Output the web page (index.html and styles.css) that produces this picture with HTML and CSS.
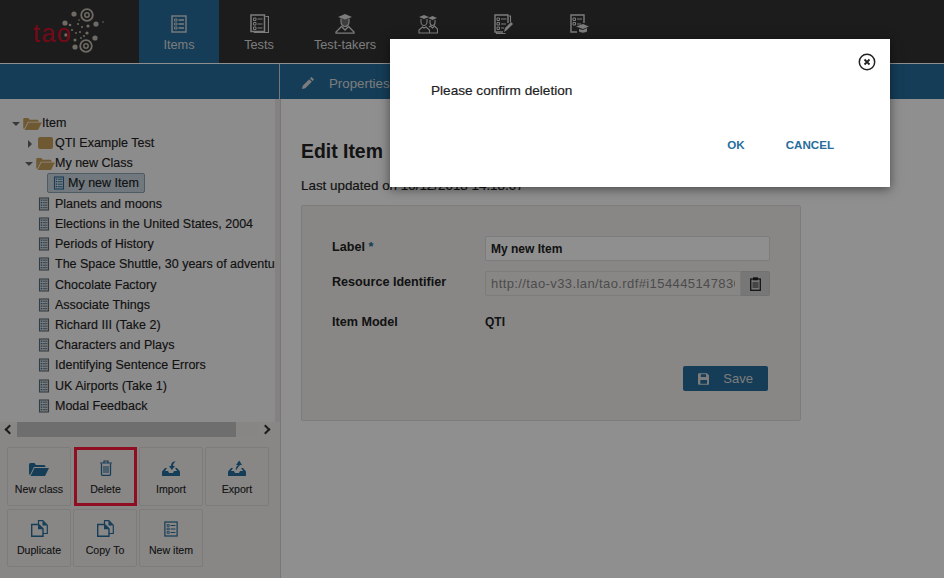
FILE: index.html
```html
<!DOCTYPE html>
<html lang="en">
<head>
<meta charset="utf-8">
<title>TAO - Items</title>
<link rel="stylesheet" href="styles.css">
</head>
<body>
<svg class="defs" width="0" height="0" aria-hidden="true">
  <symbol id="i-item" viewBox="0 0 16 18">
    <rect x="1" y="1" width="14" height="16" fill="none" stroke="currentColor" stroke-width="1.4"/>
    <path d="M3.500 4h2.500v2H3.500zM3.500 8h2.500v2H3.500zM3.500 12h2.500v2H3.500z" fill="none" stroke="currentColor" stroke-width=".9"/>
    <path d="M7.500 5h5.500M7.500 9h5.500M7.500 13h5.500" stroke="currentColor" stroke-width="1.300"/>
  </symbol>
  <symbol id="i-tree" viewBox="0 0 12 14">
    <rect x="1.500" y="1" width="9" height="12" fill="#d3dbe0" stroke="currentColor" stroke-width="1.100"/>
    <path d="M2.800 3.200h1.500M2.800 5.700h1.500M2.800 8.200h1.500M2.800 10.700h1.500" stroke="#2a6a96" stroke-width="1.300"/>
    <path d="M5 3.200h4.500M5 5.700h4.500M5 8.200h4.500M5 10.700h4.500" stroke="currentColor" stroke-width=".9"/>
  </symbol>
  <symbol id="i-folder-open" viewBox="0 0 20 14">
    <path d="M0 12V2.500Q0 1 1.500 1h4L7 3h8q1.500 0 1.500 1.500V5H5L1 13z" fill="currentColor"/>
    <path d="M5.500 6H20l-4 8H1.500z" fill="currentColor"/>
  </symbol>
  <symbol id="i-doc2" viewBox="0 0 17 17">
    <path d="M7.500 4.500V.7h4.300l4.500 4.500v8.300h-4.500" fill="none" stroke="currentColor" stroke-width="1.200"/>
    <path d="M11.500 1v4.500h4.500z" fill="currentColor"/>
    <path d="M.7 4.500h6.800l4.500 4.300v7.500H.7z" fill="none" stroke="currentColor" stroke-width="1.400"/>
    <path d="M7 4.500v4.800h5z" fill="currentColor"/>
  </symbol>
</svg>

<header class="topbar">
  <div class="logo">
    <svg class="logo-mark" width="110" height="60" viewBox="0 0 110 60" aria-hidden="true">
      <g fill="#c7bfb2">
        <circle cx="74" cy="14" r="2.600"/><circle cx="65" cy="23" r="2.600"/><circle cx="70" cy="25" r="1.300"/>
        <circle cx="96" cy="24" r="2.600"/><circle cx="88" cy="26" r="1.600"/><circle cx="95" cy="38" r="2.600"/>
        <circle cx="87" cy="33" r="1.600"/><circle cx="75" cy="47" r="2.600"/><circle cx="75" cy="40" r="1.500"/>
        <circle cx="66" cy="35" r="1.800"/><circle cx="72" cy="30" r="1"/><circle cx="78" cy="24" r="1"/>
        <circle cx="82" cy="27" r="1"/><circle cx="80" cy="32" r="1"/><circle cx="84" cy="36" r="1"/>
        <circle cx="76" cy="33" r=".9"/><circle cx="81" cy="38" r=".9"/><circle cx="79" cy="20" r=".8"/>
      </g>
      <g fill="none" stroke="#c7bfb2">
        <circle cx="87" cy="15" r="5.800" stroke-width="1.800"/><circle cx="87" cy="15" r="2.200" stroke-width="1.500"/>
        <circle cx="86" cy="46" r="5.800" stroke-width="1.800"/><circle cx="86" cy="46" r="2.200" stroke-width="1.500"/>
      </g>
      <circle cx="103" cy="22" r="1" fill="#888"/>
    </svg>
    <span class="logo-text">tao</span>
  </div>
  <nav class="mainnav">
    <a class="nav-item nav-items active">
      <svg class="nav-icon" width="16" height="18"><use href="#i-item"/></svg>
      <span>Items</span>
    </a>
    <a class="nav-item nav-tests">
      <svg class="nav-icon" width="19" height="20" viewBox="0 0 19 20">
        <path d="M15.500 2.500h3v16H4.500V17" fill="none" stroke="currentColor" stroke-width="1.200"/>
        <rect x="1" y="1" width="13.500" height="16.500" fill="none" stroke="currentColor" stroke-width="1.500"/>
        <path d="M3.500 4h2.500v2.500H3.500zM3.500 8.500h2.500V11H3.500zM3.500 13h2.500v2.500H3.500z" fill="none" stroke="currentColor"/>
        <path d="M7.500 5h5M7.500 10h5M7.500 14h5" stroke="currentColor" stroke-width="1.200"/>
      </svg>
      <span>Tests</span>
    </a>
    <a class="nav-item nav-takers">
      <svg class="nav-icon" width="20" height="20" viewBox="0 0 20 20">
        <path d="M10 0 3 3l7 2.500L17 3z" fill="currentColor"/>
        <path d="M6 4.500v3.500c0 2.500 2 4.500 4 4.500s4-2 4-4.500V4.500" fill="currentColor" fill-opacity=".35" stroke="currentColor" stroke-width="1.200"/>
        <path d="M6.500 12.500 1 18v1.200h18V18l-5.500-5.500L10 16z" fill="none" stroke="currentColor" stroke-width="1.300"/>
      </svg>
      <span>Test-takers</span>
    </a>
    <a class="nav-item nav-groups">
      <svg class="nav-icon" width="20" height="20" viewBox="0 0 20 20">
        <path d="M1 3l5-2 5 2-5 2zM10 4l4.500-2L19 4l-4.500 2z" fill="currentColor"/>
        <path d="M3 5v3c0 2 1.500 3.500 3 3.500S9 10 9 8V5M12 6v2.500c0 1.700 1 3 2.500 3S17 10.200 17 8.500V6" fill="none" stroke="currentColor" stroke-width="1.100"/>
        <path d="M1 19v-3l3.500-3L6 14l2-1 3.500 3v3zM11 13l1.500-1 2 2 2-2L19.500 15v4H12" fill="none" stroke="currentColor" stroke-width="1.100"/>
      </svg>
      <span>Groups</span>
    </a>
    <a class="nav-item nav-deliveries">
      <svg class="nav-icon" width="19" height="20" viewBox="0 0 19 20">
        <path d="M15 2h1.500v6M2.500 18v1.500h9" fill="none" stroke="currentColor" stroke-width="1.100"/>
        <path d="M14 9V1H1v17h8" fill="none" stroke="currentColor" stroke-width="1.400"/>
        <path d="M3 4h2.500v2.500H3zM3 8.500h2.500V11H3zM3 13h2.500v2.500H3z" fill="none" stroke="currentColor"/>
        <path d="M7 5h5.500M7 10h5M7 14h3" stroke="currentColor" stroke-width="1.200"/>
        <path d="M10 18l1-4 6-6 2 2-6 6z" fill="currentColor"/>
      </svg>
      <span>Deliveries</span>
    </a>
    <a class="nav-item nav-results">
      <svg class="nav-icon" width="19" height="20" viewBox="0 0 19 20">
        <path d="M14 9V1H1v17h6" fill="none" stroke="currentColor" stroke-width="1.400"/>
        <path d="M3 4h2.500v2.500H3zM3 8.500h2.500V11H3z" fill="none" stroke="currentColor"/>
        <path d="M7 5h5M7 10h4" stroke="currentColor" stroke-width="1.200"/>
        <path d="M13 10l-7 2.500 7 2.500 6-2.500zM9 15v2.500c2 1.500 6 1.500 8 0V14l-4 2z" fill="currentColor"/>
      </svg>
      <span>Results</span>
    </a>
  </nav>
</header>

<div class="subbar">
  <div class="subbar-left"></div>
  <div class="subbar-right">
    <svg class="pencil" width="12" height="12" viewBox="0 0 12 12"><path d="M0 12l.7-3.300 6.500-6.500 2.600 2.600-6.500 6.500zM8 1.400 9.200.2q.3-.2.600 0L11.800 2.200q.2.300 0 .6L10.600 4z" fill="currentColor"/></svg>
    <span>Properties</span>
  </div>
</div>

<main class="workspace">
  <aside class="sidebar">
    <div class="tree-wrap">
      <ul class="tree">
        <li class="row row-0"><i class="tri tri-down"></i><svg class="folder" width="19" height="13"><use href="#i-folder-open"/></svg><span>Item</span></li>
        <li class="row row-1"><i class="tri tri-right"></i><span class="folder-closed"></span><span>QTI Example Test</span></li>
        <li class="row row-1"><i class="tri tri-down"></i><svg class="folder" width="19" height="13"><use href="#i-folder-open"/></svg><span>My new Class</span></li>
        <li class="row row-sel"><span class="selected"><svg class="leaf" width="12" height="14"><use href="#i-tree"/></svg><span>My new Item</span></span></li>
        <li class="row row-leaf"><svg class="leaf" width="12" height="14"><use href="#i-tree"/></svg><span>Planets and moons</span></li>
        <li class="row row-leaf"><svg class="leaf" width="12" height="14"><use href="#i-tree"/></svg><span>Elections in the United States, 2004</span></li>
        <li class="row row-leaf"><svg class="leaf" width="12" height="14"><use href="#i-tree"/></svg><span>Periods of History</span></li>
        <li class="row row-leaf"><svg class="leaf" width="12" height="14"><use href="#i-tree"/></svg><span>The Space Shuttle, 30 years of adventure</span></li>
        <li class="row row-leaf"><svg class="leaf" width="12" height="14"><use href="#i-tree"/></svg><span>Chocolate Factory</span></li>
        <li class="row row-leaf"><svg class="leaf" width="12" height="14"><use href="#i-tree"/></svg><span>Associate Things</span></li>
        <li class="row row-leaf"><svg class="leaf" width="12" height="14"><use href="#i-tree"/></svg><span>Richard III (Take 2)</span></li>
        <li class="row row-leaf"><svg class="leaf" width="12" height="14"><use href="#i-tree"/></svg><span>Characters and Plays</span></li>
        <li class="row row-leaf"><svg class="leaf" width="12" height="14"><use href="#i-tree"/></svg><span>Identifying Sentence Errors</span></li>
        <li class="row row-leaf"><svg class="leaf" width="12" height="14"><use href="#i-tree"/></svg><span>UK Airports (Take 1)</span></li>
        <li class="row row-leaf"><svg class="leaf" width="12" height="14"><use href="#i-tree"/></svg><span>Modal Feedback</span></li>
      </ul>
      <div class="vscroll"></div>
    </div>
    <div class="hscroll">
      <span class="arrow arrow-l"></span>
      <div class="track"><div class="thumb"></div></div>
      <span class="arrow arrow-r"></span>
    </div>
    <div class="actions">
      <a class="action">
        <svg width="20" height="14"><use href="#i-folder-open"/></svg>
        <span>New class</span>
      </a>
      <a class="action action-hl">
        <svg width="14" height="16" viewBox="0 0 14 16"><path d="M1 3h12M5 3V1h4v2" fill="none" stroke="currentColor" stroke-width="1.200"/><path d="M2.500 3.500v11q0 .8.800.8h7.400q.8 0 .8-.8v-11" fill="none" stroke="currentColor" stroke-width="1.300"/><path d="M5 6v7M7 6v7M9 6v7" stroke="currentColor" stroke-width="1.100"/></svg>
        <span>Delete</span>
      </a>
      <a class="action">
        <svg width="18" height="16" viewBox="0 0 18 16"><path d="M3 8 0 11.500v4q0 .5.500.5h17q.5 0 .5-.5v-4L15 8h-2l2 3h-3l-1 2H7l-1-2H3l2-3z" fill="currentColor"/><path d="M14 1.500C10.500 1 9 3 9 6H7l2.800 4L13 6h-2c0-2 1-3.500 3-4.500z" fill="currentColor"/></svg>
        <span>Import</span>
      </a>
      <a class="action">
        <svg width="18" height="16" viewBox="0 0 18 16"><path d="M3 8 0 11.500v4q0 .5.500.5h17q.5 0 .5-.5v-4L15 8h-2l2 3h-3l-1 2H7l-1-2H3l2-3z" fill="currentColor"/><path d="M8 10.500C7.500 8 8 6.500 10 5H8l3.200-4.500L14 5h-2c-1.500 1.500-2.500 3-4 5.500z" fill="currentColor"/></svg>
        <span>Export</span>
      </a>
      <a class="action">
        <svg width="17" height="17"><use href="#i-doc2"/></svg>
        <span>Duplicate</span>
      </a>
      <a class="action">
        <svg width="17" height="17"><use href="#i-doc2"/></svg>
        <span>Copy To</span>
      </a>
      <a class="action">
        <svg width="14" height="16"><use href="#i-item"/></svg>
        <span>New item</span>
      </a>
    </div>
  </aside>

  <section class="content">
    <h1>Edit Item</h1>
    <p class="updated">Last updated on 10/12/2018 14:18:07</p>
    <form class="panel">
      <div class="field">
        <label>Label <em>*</em></label>
        <input class="input" type="text" value="My new Item">
      </div>
      <div class="field">
        <label>Resource Identifier</label>
        <div class="input-group">
          <input class="input input-ro" type="text" value="http://tao-v33.lan/tao.rdf#i154445147836" readonly>
          <span class="copy">
            <svg width="11" height="14" viewBox="0 0 11 14"><rect x=".7" y="2" width="9.600" height="11.300" fill="none" stroke="currentColor" stroke-width="1.300"/><rect x="3" y=".3" width="5" height="3" fill="currentColor"/><path d="M2.500 6h6M2.500 8h6M2.500 10h6" stroke="currentColor"/></svg>
          </span>
        </div>
      </div>
      <div class="field field-model">
        <label>Item Model</label>
        <span class="value">QTI</span>
      </div>
      <div class="form-foot">
        <button class="save" type="button">
          <svg width="12" height="12" viewBox="0 0 12 12"><path fill-rule="evenodd" d="M0 1q0-1 1-1h8.500L12 2.500V11q0 1-1 1H1q-1 0-1-1zM3 1v3h5.500V1zM2.500 7v4h7V7z" fill="currentColor"/></svg>
          <span>Save</span>
        </button>
      </div>
    </form>
  </section>
</main>

<div class="overlay"></div>

<div class="modal" role="dialog">
  <svg class="close" width="18" height="18" viewBox="0 0 18 18"><circle cx="9" cy="9" r="7.700" fill="none" stroke="#222" stroke-width="1.500"/><path d="M6.500 6.500l5 5M11.500 6.500l-5 5" stroke="#222" stroke-width="1.800"/></svg>
  <p class="message">Please confirm deletion</p>
  <div class="modal-actions">
    <a class="link">OK</a>
    <a class="link">CANCEL</a>
  </div>
</div>
</body>
</html>
```

FILE: styles.css
```css
* { box-sizing: border-box; }
html, body { margin: 0; height: 100%; }
body {
  position: relative;
  width: 944px;
  height: 578px;
  overflow: hidden;
  background: #fff;
  color: #222;
  font-family: "Liberation Sans", Arial, sans-serif;
  font-size: 13px;
}
.defs { position: absolute; }
ul { list-style: none; margin: 0; padding: 0; }

/* top bar */
.topbar {
  display: flex;
  height: 64px;
  background: #333;
  border-bottom: 1px solid #fff;
}
.logo { position: relative; width: 139px; flex: none; }
.logo-mark { position: absolute; left: 0; top: 0; }
.logo-text {
  position: absolute;
  left: 33px;
  top: 18px;
  color: #d0112b;
  font-size: 25px;
  letter-spacing: 1.500px;
  line-height: 30px;
}
.mainnav { display: flex; }
.nav-item {
  display: flex;
  flex-direction: column;
  align-items: center;
  padding-top: 14px;
  gap: 4px;
  color: #ddd;
  font-size: 12.700px;
  line-height: 14px;
}
.nav-icon { flex: none; height: 20px; }
.nav-items { width: 80px; }
.nav-tests { width: 80px; }
.nav-takers { width: 92px; }
.nav-groups { width: 74px; }
.nav-deliveries { width: 76px; }
.nav-results { width: 76px; }
.nav-item.active { background: #266d9c; }

.subbar {
  display: flex;
  height: 35px;
  background: #266d9c;
  color: #fff;
}
.subbar-left { width: 280px; border-right: 1px solid #d4d5d7; }
.subbar-right {
  display: flex;
  align-items: center;
  padding: 3px 0 0 22px;
  gap: 15px;
  color: #ddd;
  font-size: 13.300px;
}
.pencil { flex: none; margin-top: -1px; }

/* layout */
.workspace { display: flex; height: 479px; }
.sidebar {
  width: 281px;
  flex: none;
  background: #f3f1ef;
  border-right: 1px solid #d4d5d7;
}
.tree-wrap { display: flex; height: 323px; background: #fbfafa; }
.tree {
  width: 275px;
  padding-top: 14px;
  overflow: hidden;
  white-space: nowrap;
  font-size: 12.500px;
  color: #222;
  -webkit-text-stroke: .15px #222;
}
.vscroll { width: 5px; background: #ebe8e4; }
.row {
  display: flex;
  align-items: center;
  height: 20.200px;
}
.row-0 { padding-left: 12px; }
.row-1 { padding-left: 25px; }
.row-sel { padding-left: 47px; }
.row-leaf { padding-left: 38px; }
.tri { flex: none; width: 0; height: 0; border-style: solid; border-color: transparent; }
.tri-down { border-width: 4px 4px 0; border-top-color: #666; margin-right: 3px; margin-top: 1px; }
.tri-right { border-width: 4px 0 4px 4px; border-left-color: #666; margin: 1px 6px 0 3px; }
.folder { color: #c79f5a; flex: none; }
.folder-closed {
  flex: none;
  width: 15px;
  height: 12px;
  margin-right: 2px;
  background: #c79f5a;
  border-radius: 2px;
}
.leaf { color: #5d6b75; flex: none; margin-right: 5px; }
.selected {
  display: flex;
  align-items: center;
  height: 20px;
  margin-top: -2px;
  padding: 0 5px;
  background: #c9d8e1;
  border: 1px solid #8da3b0;
  border-radius: 2px;
}
.selected .leaf { color: #266d9c; margin-right: 3px; }

.hscroll {
  display: flex;
  align-items: center;
  height: 15px;
}
.arrow { width: 17px; display: flex; justify-content: center; }
.arrow::before {
  content: "";
  width: 5px;
  height: 5px;
  border: solid #333;
  border-width: 2px 0 0 2px;
}
.arrow-l::before { transform: translateX(1px) rotate(-45deg); }
.arrow-r::before { transform: translateX(-1px) rotate(135deg); }
.track { width: 241px; height: 15px; background: #f1efed; }
.thumb { width: 219px; height: 15px; background: #c5c5c5; }

.actions {
  display: grid;
  grid-template-columns: repeat(4, 64px);
  grid-template-rows: 59px 58px;
  column-gap: 2px;
  row-gap: 3px;
  padding: 10px 0 0 7px;
}
.action {
  display: flex;
  flex-direction: column;
  align-items: center;
  justify-content: flex-end;
  padding-bottom: 9px;
  gap: 7px;
  background: #f3f1ef;
  border: 1px solid #ddd;
  border-radius: 2px;
  color: #222;
  font-size: 10.600px;
  line-height: 13px;
  -webkit-text-stroke: .1px #222;
}
.action svg { color: #266d9c; flex: none; }
.action-hl { border: 3px solid #ff1a3d; border-radius: 0; padding-bottom: 7px; margin-left: 1px; }

/* content */
.content { flex: 1; padding: 40px 0 0 20px; background: #fff; }
h1 {
  margin: 0;
  font-size: 19.400px;
  line-height: 24px;
  font-weight: bold;
  color: #222;
}
.updated { margin: 15px 0 0; font-size: 13.400px; line-height: 16px; -webkit-text-stroke: .15px #222; }
.panel {
  width: 500px;
  height: 216px;
  margin-top: 11px;
  padding: 30px 30px 0;
  background: #f3f1ef;
  border: 1px solid #ddd;
  border-radius: 2px;
}
.field { display: flex; height: 25px; margin-bottom: 10px; }
.field label { width: 153px; flex: none; font-weight: bold; font-size: 12.600px; line-height: 20px; padding-top: 1px; }
.field em { color: #266d9c; font-style: normal; }
.input {
  width: 285px;
  height: 25px;
  padding: 0 5px;
  border: 1px solid #ddd;
  border-radius: 2px;
  background: #fff;
  font: bold 12px "Liberation Sans", Arial, sans-serif;
  color: #222;
}
.input-group { display: flex; width: 285px; }
.input-ro {
  flex: 1;
  width: 0;
  background: #f3f1ef;
  color: #888;
  font-weight: normal;
  font-size: 13px;
  letter-spacing: .4px;
  border-radius: 2px 0 0 2px;
}
.copy {
  display: flex;
  align-items: center;
  justify-content: center;
  width: 29px;
  height: 25px;
  background: #d4d5d7;
  border: 1px solid #ccc;
  border-left: 0;
  border-radius: 0 2px 2px 0;
  color: #222;
}
.field-model { margin-top: 15px; }
.value { font-weight: bold; font-size: 12px; line-height: 22px; }
.form-foot { display: flex; justify-content: flex-end; padding: 20px 2px 0 0; }
.save {
  display: flex;
  align-items: center;
  gap: 14px;
  width: 85px;
  height: 25px;
  padding: 0 15px;
  border: 0;
  border-radius: 2px;
  background: #266d9c;
  color: #ddd;
  font: 13px "Liberation Sans", Arial, sans-serif;
}

/* overlay + modal */
.overlay {
  position: absolute;
  inset: 0;
  background: rgba(0, 0, 0, .44);
}
.modal {
  position: absolute;
  left: 390px;
  top: 39px;
  width: 500px;
  height: 148px;
  padding: 44px 41px 0;
  background: #fff;
  box-shadow: 0 2px 10px rgba(0, 0, 0, .5);
}
.close { position: absolute; right: 14px; top: 14px; }
.message { margin: 0; font-size: 13.600px; line-height: 15px; color: #222; -webkit-text-stroke: .2px #222; }
.modal-actions {
  display: flex;
  justify-content: flex-end;
  gap: 41px;
  margin-top: 40px;
  padding-right: 15px;
}
.link { color: #266d9c; font-size: 11.600px; font-weight: bold; line-height: 14px; }
```
